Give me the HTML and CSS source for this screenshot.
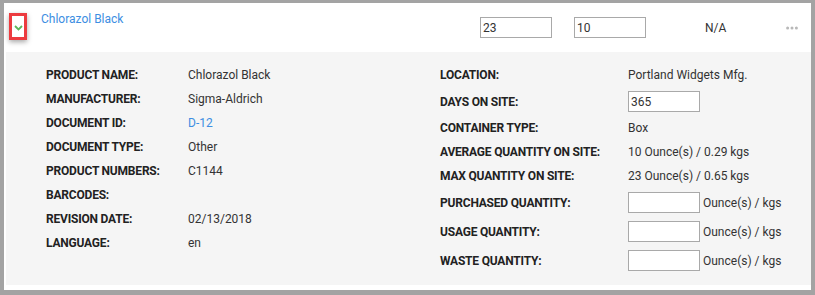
FILE: index.html
```html
<!DOCTYPE html>
<html>
<head>
<meta charset="utf-8">
<link rel="stylesheet" href="styles.css">
</head>
<body>
<div class="card">
  <div class="head">
    <div class="toggle">
      <svg width="9" height="6" viewBox="0 0 9 6"><path d="M1 1 L4.5 4.5 L8 1" fill="none" stroke="#5cb85c" stroke-width="1.8"/></svg>
    </div>
    <a class="title">Chlorazol Black</a>
    <div class="head-right">
      <input class="field" value="23">
      <input class="field second" value="10">
      <span class="na">N/A</span>
      <svg class="dots" width="12" height="4" viewBox="0 0 12 4"><circle cx="1.6" cy="2" r="1.5" fill="#b8b8b8"/><circle cx="6" cy="2" r="1.5" fill="#b8b8b8"/><circle cx="10.4" cy="2" r="1.5" fill="#b8b8b8"/></svg>
    </div>
  </div>
  <div class="panel">
    <div class="col left">
      <div class="row"><span class="lbl">Product Name:</span><span class="val">Chlorazol Black</span></div>
      <div class="row"><span class="lbl">Manufacturer:</span><span class="val">Sigma-Aldrich</span></div>
      <div class="row"><span class="lbl">Document ID:</span><span class="val link">D-12</span></div>
      <div class="row"><span class="lbl">Document Type:</span><span class="val">Other</span></div>
      <div class="row"><span class="lbl">Product Numbers:</span><span class="val">C1144</span></div>
      <div class="row"><span class="lbl">Barcodes:</span><span class="val"></span></div>
      <div class="row"><span class="lbl">Revision Date:</span><span class="val">02/13/2018</span></div>
      <div class="row"><span class="lbl">Language:</span><span class="val">en</span></div>
    </div>
    <div class="col right">
      <div class="row"><span class="lbl">Location:</span><span class="val">Portland Widgets Mfg.</span></div>
      <div class="row tall"><span class="lbl">Days on Site:</span><span class="val"><input class="field" value="365"></span></div>
      <div class="row"><span class="lbl">Container Type:</span><span class="val">Box</span></div>
      <div class="row"><span class="lbl">Average Quantity on Site:</span><span class="val">10 Ounce(s) / 0.29 kgs</span></div>
      <div class="row"><span class="lbl">Max Quantity on Site:</span><span class="val">23 Ounce(s) / 0.65 kgs</span></div>
      <div class="row tall"><span class="lbl">Purchased Quantity:</span><span class="val"><input class="field"><span class="unit">Ounce(s) / kgs</span></span></div>
      <div class="row tall"><span class="lbl">Usage Quantity:</span><span class="val"><input class="field"><span class="unit">Ounce(s) / kgs</span></span></div>
      <div class="row tall"><span class="lbl">Waste Quantity:</span><span class="val"><input class="field"><span class="unit">Ounce(s) / kgs</span></span></div>
    </div>
  </div>
</div>
</body>
</html>
```

FILE: styles.css
```css
html, body {
  margin: 0;
  padding: 0;
}
body {
  background: #a3a3a3;
  font-family: Roboto, "Liberation Sans", Arial, sans-serif;
  font-size: 12px;
  color: #333;
  width: 815px;
  height: 295px;
  overflow: hidden;
  padding-top: 3px;
  box-sizing: border-box;
}
.card {
  background: #fff;
  margin: 0 4px 0 4px;
  height: 287px;
  padding-bottom: 5px;
  box-sizing: border-box;
  display: flex;
  flex-direction: column;
}
.head {
  height: 49px;
  display: flex;
  align-items: flex-start;
  flex: none;
}
.toggle {
  margin: 10px 0 0 5px;
  width: 18px;
  height: 27px;
  border: 3px solid #ec3b3f;
  box-sizing: border-box;
  box-shadow: 0 2px 5px rgba(0, 0, 0, 0.35);
  display: flex;
  align-items: center;
  justify-content: center;
  padding-top: 2px;
}
.toggle svg {
  display: block;
}
.title {
  margin: 8px 0 0 14px;
  line-height: 16px;
  color: #3d8ee2;
  font-size: 12px;
}
.head-right {
  margin-left: auto;
  margin-right: 13px;
  margin-top: 14px;
  display: flex;
  align-items: center;
}
.field {
  width: 72px;
  height: 21px;
  box-sizing: border-box;
  border: 1px solid #a9a9a9;
  border-radius: 0;
  padding: 0 0 0 2px;
  margin: 0;
  font-family: Roboto, "Liberation Sans", Arial, sans-serif;
  font-size: 12px;
  color: #333;
  background: #fff;
  outline: none;
  display: block;
}
.second {
  margin-left: 22px;
}
.na {
  margin-left: 59px;
  width: 22px;
  line-height: 16px;
}
.dots {
  margin-left: 59px;
  display: block;
}
.panel {
  flex: 1;
  margin-left: 2px;
  background: #f5f5f5;
  padding: 11px 0 0 40px;
  display: flex;
}
.col {
  display: flex;
  flex-direction: column;
}
.left {
  width: 394px;
}
.right {
  flex: 1;
}
.row {
  display: flex;
  align-items: center;
  height: 24px;
}
.row.tall {
  height: 29px;
}
.lbl {
  font-weight: bold;
  text-transform: uppercase;
  color: #222;
  letter-spacing: -0.2px;
  flex: none;
}
.left .lbl {
  width: 142px;
}
.right .lbl {
  width: 188px;
}
.val {
  display: flex;
  align-items: center;
  color: #333;
}
.link {
  color: #3d8ee2;
}
.unit {
  margin-left: 3px;
}
```
